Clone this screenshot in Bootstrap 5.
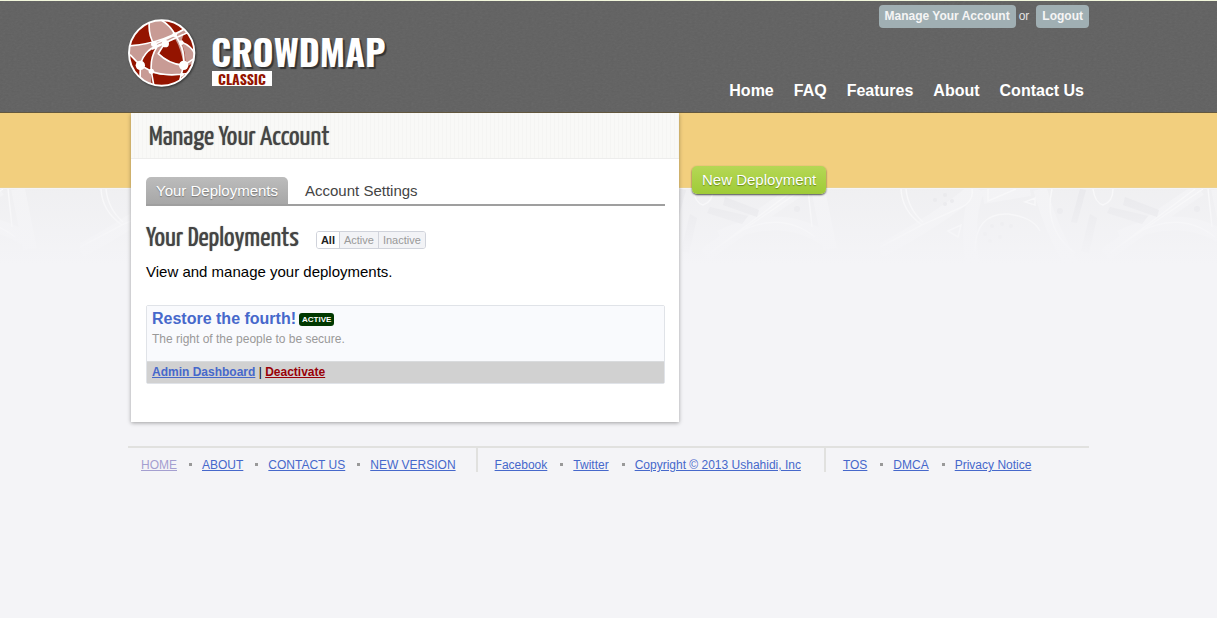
<!DOCTYPE html>
<html lang="en">
<head>
<meta charset="utf-8">
<meta name="viewport" content="width=device-width, initial-scale=1">
<title>Manage Your Account - Crowdmap Classic</title>
<link href="https://cdn.jsdelivr.net/npm/bootstrap@5.3.0/dist/css/bootstrap.min.css" rel="stylesheet">
<style>
  body { font-family: "Liberation Sans", Arial, sans-serif; font-size: 15px; line-height: 20px; color: #000; background: #f4f4f7; }
  a { color: #4668cb; }
  .wrap { max-width: 961px; }
  .display-face { font-family: "Yanone Kaffeesatz", "Liberation Sans Narrow", "Liberation Sans", sans-serif; font-weight: 400; color: #444; text-shadow: 0 0 1px rgba(68,68,68,.7); }

  /* header */
  .site-header { border-top: 1px solid #f2f7dc; border-bottom: 1px solid #63583f; background: #606060 url("data:image/svg+xml,%3Csvg xmlns='http://www.w3.org/2000/svg' width='120' height='112'%3E%3Cfilter id='n'%3E%3CfeTurbulence type='fractalNoise' baseFrequency='.35 .6' numOctaves='2' stitchTiles='stitch'/%3E%3CfeColorMatrix type='saturate' values='0'/%3E%3C/filter%3E%3Crect width='120' height='112' filter='url(%23n)' opacity='.08'/%3E%3C/svg%3E"); }
  .site-header .wrap { min-height: 111px; }
  .brand { padding-top: 17px; gap: 13px; color: #fff; }
  .brand svg { filter: drop-shadow(1px 1px 1px #333); }
  .brand-name, .brand-tag { font-family: "Oswald", "Yanone Kaffeesatz", "Liberation Sans Narrow", "Liberation Sans", sans-serif; font-weight: 700; }
  .brand-name { font-size: 36px; line-height: 32px; color: #fff; text-shadow: 2px 2px 1px #333; padding-top: 17px; }
  .brand-tag { font-size: 14px; line-height: 15px; color: #941400; background: #fff; padding: 0 6px; margin: 4px 0 0 1px; }
  .account { font-size: 12px; line-height: 15px; color: #e4e4e4; padding-top: 4px; gap: 3px; }
  .pill { background: #a0afb3; color: #f5f5f5; border-radius: 4px; padding: 4px 6px; font-weight: 700; text-decoration: none; }
  .main-nav { gap: 20px; padding: 0 5px 11px 0; }
  .main-nav a { color: #fff; font-size: 16px; font-weight: 700; text-decoration: none; }

  /* gold strip with the faded road map below */
  .stage { background:
      linear-gradient(#f2cf7e 74px, #e6d3a0 75px, transparent 75px) no-repeat 0 0 / 100% 76px,
      linear-gradient(rgba(244,244,247,.1), #f4f4f7 76px) no-repeat 0 75px / 100% 84px,
      url("data:image/svg+xml,%3Csvg xmlns='http://www.w3.org/2000/svg' width='400' height='80' fill='none'%3E%3Crect width='400' height='80' fill='%23efeff1'/%3E%3Cg stroke='%23f3f3f5' stroke-width='14'%3E%3Cpath d='M0 62Q60 30 95 0M98 0Q85 30 93 80M160 0Q172 45 195 80M225 66Q275 30 320 0M338 0 350 60M103 8 150 0M240 48Q300 20 345 50'/%3E%3C/g%3E%3Cg fill='%23e8e8eb'%3E%3Cpath d='M245 8l34 13-2 7-34-12zM230 18l38 9-6 8-35-11zM200 0l6 1-9 33-6-1zM210 25l7 4-8 35-8-2z'/%3E%3Ccircle cx='55' cy='11' r='2'/%3E%3Ccircle cx='65' cy='6' r='2'/%3E%3Ccircle cx='72' cy='12' r='2'/%3E%3Ccircle cx='65' cy='15' r='2'/%3E%3Ccircle cx='112' cy='37' r='2'/%3E%3Ccircle cx='122' cy='35' r='2'/%3E%3Ccircle cx='131' cy='37' r='2'/%3E%3Ccircle cx='105' cy='45' r='2'/%3E%3Ccircle cx='120' cy='48' r='2'/%3E%3Ccircle cx='110' cy='52' r='2'/%3E%3Ccircle cx='180' cy='22' r='3'/%3E%3Ccircle cx='317' cy='20' r='3'/%3E%3C/g%3E%3Cg stroke='%23f9f9fa' stroke-width='1.5'%3E%3Cpath d='M21 0Q22 22 42 36L82 18Q94 12 92 0M26 0Q28 20 43 33M0 58 42 36M95 62Q95 24 128 25 153 28 160 42M108 0v12L136 0M172 0Q163 40 195 64M230 64 315 0M238 58 323 0M255 45Q300 20 335 48M328 0l4 38M213 0q2 14 10 16 10-3 10-16M145 13l10-4v7zM68 42l13-6-3 12z'/%3E%3C/g%3E%3C/svg%3E") repeat-x 80px 76px; }
  .panel { flex: 0 1 548px; margin-left: 3px; background: #fff; box-shadow: 0 1px 4px rgba(0,0,0,.35); clip-path: inset(0 -6px -8px -6px); padding-bottom: 38px; }
  .panel-title { font-size: 28px; line-height: 50px; margin: 0; padding: 0 18px; height: 46px; border-bottom: 1px solid #ededec; background: repeating-linear-gradient(90deg, #f9f9f7 0 3px, #f5f5f3 3px 4px); }
  .panel-body { padding: 18px 14px 0 15px; }
  .tabs { border-bottom: 2px solid #9f9f9f; gap: 7px; }
  .tabs a { color: #444; text-decoration: none; padding: 4px 10px 3px; border-radius: 5px 5px 0 0; }
  .tabs a.active { color: #fff; background: linear-gradient(#bcbcbc, #a7a7a7); text-shadow: 0 1px 1px #777; }
  .section-title { font-size: 28px; line-height: 32px; margin: 0; }
  .section-head { gap: 17px; margin-top: 17px; }
  .filters { margin-top: 2px; border: 1px solid #d0d3db; border-radius: 3px; overflow: hidden; }
  .filters button { font-size: 11px; line-height: 16px; padding: 0 4px; border: 0; color: #999; background: #f2f3f6; }
  .filters button + button { border-left: 1px solid #d0d3db; }
  .filters button.active { color: #222; background: #fff; font-weight: 700; }
  .lede { margin: 7px 0 23px; }
  .deployment { border: 1px solid #e0e3e8; border-radius: 2px; font-size: 12px; }
  .deployment-info { background: #f9fafd; padding: 3px 5px 12px; }
  .deployment-info h3 { font-size: 16px; line-height: 20px; font-weight: 700; margin: 0; }
  .deployment-info h3 a { text-decoration: none; }
  .deployment-info p { color: #999; margin: 0; }
  .state { font-size: 8px; line-height: 13px; font-weight: 700; color: #fff; background: #003800; border-radius: 3px; padding: 0 3px; margin-left: 3px; }
  .deployment-actions { background: #d1d1d1; border-top: 1px solid #d9dbdd; padding: 0 5px; line-height: 21px; }
  .deployment-actions a { font-weight: 700; }
  .deployment-actions .danger-link { color: #990008; }
  .new-btn { margin: 53px 0 0 13px; border: 0; border-radius: 5px; color: #fff; padding: 4px 10px; line-height: 20px; background: linear-gradient(#b5d755, #9fcb37); text-shadow: 0 1px 1px #6c8c20; box-shadow: 0 1px 2px rgba(0,0,0,.7); }

  /* footer */
  .site-footer { margin-top: 24px; font-size: 12px; line-height: 20px; }
  .footer-row { border-top: 2px solid #e1e1df; }
  .footer-row ul { padding: 7px 23px 0 17px; height: 24px; }
  .footer-row ul:first-child { padding: 7px 20px 0 13px; }
  .footer-row ul + ul { border-left: 2px solid #e1e1df; }
  .footer-row li + li::before { content: ""; display: inline-block; width: 3px; height: 3px; background: #999; margin: 0 10px 3px 12px; }
  .footer-row ul + ul li + li::before { margin-left: 13px; }
  .footer-row .current { color: #a49fd0; }
</style>
</head>
<body>
<header class="site-header">
  <div class="wrap container p-0 d-flex justify-content-between">
    <a class="brand d-flex align-items-start text-decoration-none" href="#">
      <svg width="70" height="70" viewBox="18 10 210 210" role="img" aria-label="Globe">
        <clipPath id="globe"><circle cx="119" cy="115" r="98"/></clipPath>
        <g clip-path="url(#globe)">
          <path fill="#c89b95" d="M16 10h210v210H16z"/>
          <g fill="#941400">
            <path d="M16 92 95 86Q78 60 82 20L16 20z"/>
            <path d="M110 10Q145 30 158 56L198 36 160 10z"/>
            <path d="M178 82Q190 110 188 150L225 128 225 50z"/>
            <path d="M128 86 160 74Q178 105 185 152L145 143 108 116z"/>
            <path d="M104 98Q62 105 55 150L88 170Q88 125 104 98z"/>
            <path d="M16 110 55 152 54 200 16 180z"/>
            <path d="M88 174Q130 187 180 178L160 220 88 220z"/>
            <path d="M183 158 220 145 200 190 176 190z"/>
          </g>
          <path fill="#c89b95" d="M176 80Q212 98 225 126L190 150Q192 112 176 80z"/>
          <path fill="#941400" d="M178 82Q208 94 217 115L225 60 185 56z"/>
          <g fill="none" stroke="#fff" stroke-width="5">
            <path d="M16 94Q75 90 125 72T210 28M82 20Q78 62 97 90M110 12Q145 30 160 62 190 105 185 152M90 104 160 70 215 46M92 92 165 58M130 86Q66 98 55 152M104 98Q84 130 88 170L96 216M108 116Q140 148 185 152L222 128M178 82Q210 95 218 118M55 152 88 170Q130 188 210 175M185 152 174 195M24 120 55 152 54 200M128 86 108 118"/>
          </g>
          <g fill="#fff"><circle cx="55" cy="152" r="14"/><circle cx="185" cy="152" r="14"/><circle cx="130" cy="87" r="11"/><circle cx="96" cy="88" r="9"/><circle cx="88" cy="170" r="8"/><circle cx="178" cy="84" r="7"/><circle cx="158" cy="60" r="7"/><circle cx="180" cy="180" r="6"/></g>
        </g>
        <circle cx="119" cy="115" r="98" fill="none" stroke="#fff" stroke-width="6"/>
      </svg>
      <span class="d-flex flex-column align-items-start">
        <span class="brand-name">CROWDMAP</span>
        <span class="brand-tag">CLASSIC</span>
      </span>
    </a>
    <div class="d-flex flex-column justify-content-between align-items-end">
      <div class="account d-flex align-items-baseline">
        <a class="pill" href="#">Manage Your Account</a> or <a class="pill ms-1" href="#">Logout</a>
      </div>
      <nav class="main-nav d-flex" aria-label="Main">
        <a href="#">Home</a><a href="#">FAQ</a><a href="#">Features</a><a href="#">About</a><a href="#">Contact Us</a>
      </nav>
    </div>
  </div>
</header>

<main class="stage">
  <div class="wrap container p-0 d-flex align-items-start">
    <section class="panel">
      <h1 class="panel-title display-face">Manage Your Account</h1>
      <div class="panel-body">
        <nav class="tabs d-flex" aria-label="Account">
          <a class="active" href="#" aria-current="page">Your Deployments</a>
          <a href="#">Account Settings</a>
        </nav>
        <div class="section-head d-flex align-items-center">
          <h2 class="section-title display-face">Your Deployments</h2>
          <div class="filters d-flex" role="group" aria-label="Filter deployments">
            <button type="button" class="active">All</button><button type="button">Active</button><button type="button">Inactive</button>
          </div>
        </div>
        <p class="lede">View and manage your deployments.</p>
        <article class="deployment">
          <div class="deployment-info">
            <h3 class="d-flex align-items-center"><a href="#">Restore the fourth!</a><span class="state">ACTIVE</span></h3>
            <p>The right of the people to be secure.</p>
          </div>
          <div class="deployment-actions"><a href="#">Admin Dashboard</a> | <a class="danger-link" href="#">Deactivate</a></div>
        </article>
      </div>
    </section>
    <button type="button" class="new-btn">New Deployment</button>
  </div>
</main>

<footer class="site-footer">
  <div class="wrap container p-0">
    <div class="footer-row d-flex">
      <ul class="list-unstyled d-flex mb-0"><li><a class="current" href="#">HOME</a></li><li><a href="#">ABOUT</a></li><li><a href="#">CONTACT US</a></li><li><a href="#">NEW VERSION</a></li></ul>
      <ul class="list-unstyled d-flex mb-0"><li><a href="#">Facebook</a></li><li><a href="#">Twitter</a></li><li><a href="#">Copyright © 2013 Ushahidi, Inc</a></li></ul>
      <ul class="list-unstyled d-flex mb-0"><li><a href="#">TOS</a></li><li><a href="#">DMCA</a></li><li><a href="#">Privacy Notice</a></li></ul>
    </div>
  </div>
</footer>
<script src="https://cdn.jsdelivr.net/npm/bootstrap@5.3.0/dist/js/bootstrap.bundle.min.js"></script>
</body>
</html>
